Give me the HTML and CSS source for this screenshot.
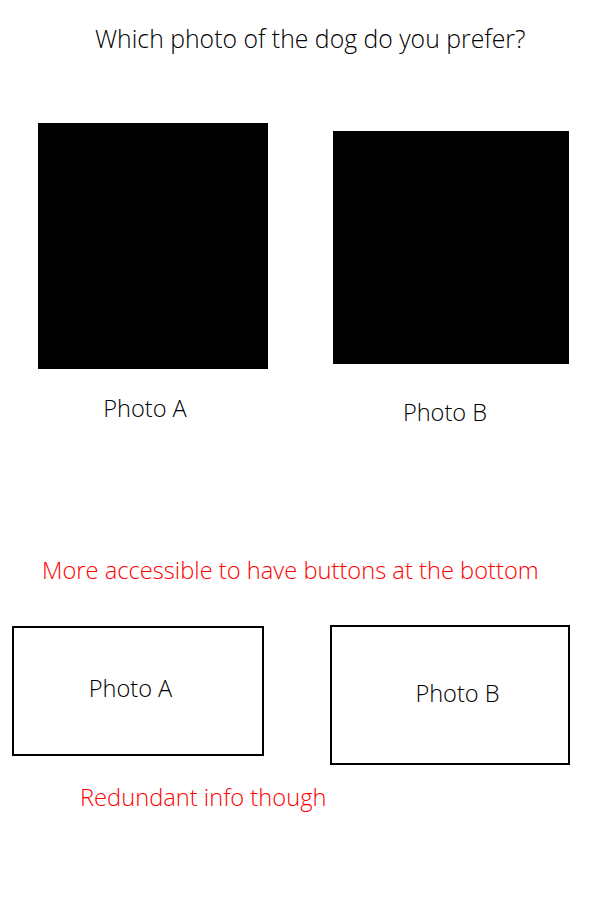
FILE: index.html
```html
<!DOCTYPE html>
<html lang="en">
<head>
<meta charset="utf-8">
<title>Dog photo preference</title>
<link rel="stylesheet" href="styles.css">
</head>
<body>
<main class="page">
  <h1 class="title">Which photo of the dog do you prefer?</h1>
  <section class="photos">
    <figure class="photo photo-a">
      <div class="photo-box"></div>
      <figcaption class="photo-label">Photo A</figcaption>
    </figure>
    <figure class="photo photo-b">
      <div class="photo-box"></div>
      <figcaption class="photo-label">Photo B</figcaption>
    </figure>
  </section>
  <p class="note note-top">More accessible to have buttons at the bottom</p>
  <section class="choices">
    <button class="choice choice-a" type="button"><span>Photo A</span></button>
    <button class="choice choice-b" type="button"><span>Photo B</span></button>
  </section>
  <p class="note note-bottom">Redundant info though</p>
</main>
</body>
</html>
```
FILE: styles.css
```css
html, body {
  margin: 0;
  padding: 0;
  background: #ffffff;
}

.page {
  width: 600px;
  height: 900px;
  font-family: "Open Sans", "Liberation Sans", sans-serif;
  font-weight: 300;
  color: #000000;
}

.title {
  margin: 0;
  padding: 22px 0 0 95px;
  font-size: 24.8px;
  font-weight: 300;
  line-height: 32px;
  white-space: nowrap;
}

.photos {
  display: flex;
  align-items: flex-start;
  margin-top: 69px;
}

.photo {
  margin: 0;
}

.photo-a {
  margin-left: 38px;
  width: 230px;
}

.photo-b {
  margin-left: 65px;
  margin-top: 8px;
  width: 236px;
}

.photo-box {
  background: #000000;
}

.photo-a .photo-box {
  height: 246px;
}

.photo-b .photo-box {
  height: 233px;
}

.photo-label {
  font-size: 23.6px;
  line-height: 30px;
  text-align: center;
}

.photo-a .photo-label {
  margin-top: 24px;
  padding-right: 16px;
}

.photo-b .photo-label {
  margin-top: 33px;
  padding-right: 12px;
}

.note {
  margin: 0;
  color: #ff0000;
  font-size: 23.7px;
  line-height: 30px;
  white-space: nowrap;
}

.note-top {
  margin-top: 128px;
  padding-left: 42px;
}

.choices {
  display: flex;
  align-items: flex-start;
  margin-top: 41px;
}

.choice {
  display: flex;
  align-items: center;
  justify-content: center;
  box-sizing: border-box;
  margin: 0;
  padding: 0;
  background: #ffffff;
  border: 2px solid #000000;
  border-radius: 0;
  font-family: inherit;
  font-weight: 300;
  font-size: 23.6px;
  color: #000000;
}

.choice-a {
  margin-left: 12px;
  width: 252px;
  height: 130px;
  padding-right: 15px;
  padding-bottom: 6px;
}

.choice-b {
  margin-left: 66px;
  margin-top: -1px;
  width: 240px;
  height: 140px;
  padding-left: 15px;
  padding-bottom: 4px;
}

.note-bottom {
  margin-top: 17px;
  padding-left: 80px;
}
```
